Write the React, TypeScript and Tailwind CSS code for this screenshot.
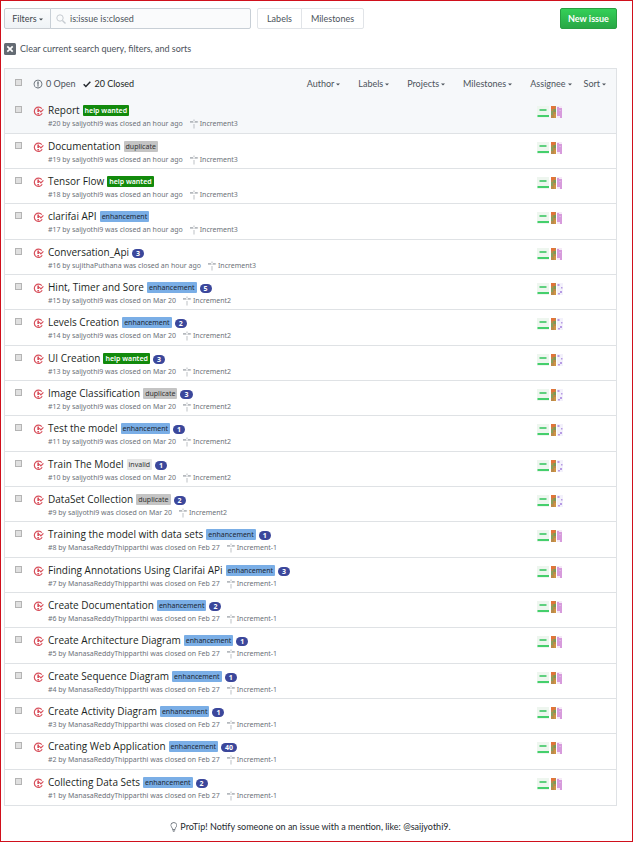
import React from "react";

type LabelName = "help wanted" | "duplicate" | "enhancement" | "invalid";

interface Issue {
  id: number;
  title: string;
  label?: LabelName;
  comments?: number;
  author: string;
  closed: string;
  milestone: string;
  avatar: "pink" | "violet";
}

const me = "saijyothi9";
const manasa = "ManasaReddyThipparthi";

const issues: Issue[] = [
  { id: 20, title: "Report", label: "help wanted", author: me, closed: "an hour ago", milestone: "Increment3", avatar: "pink" },
  { id: 19, title: "Documentation", label: "duplicate", author: me, closed: "an hour ago", milestone: "Increment3", avatar: "pink" },
  { id: 18, title: "Tensor Flow", label: "help wanted", author: me, closed: "an hour ago", milestone: "Increment3", avatar: "pink" },
  { id: 17, title: "clarifai API", label: "enhancement", author: me, closed: "an hour ago", milestone: "Increment3", avatar: "pink" },
  { id: 16, title: "Conversation_Api", comments: 3, author: "sujithaPuthana", closed: "an hour ago", milestone: "Increment3", avatar: "pink" },
  { id: 15, title: "Hint, Timer and Sore", label: "enhancement", comments: 5, author: me, closed: "on Mar 20", milestone: "Increment2", avatar: "violet" },
  { id: 14, title: "Levels Creation", label: "enhancement", comments: 2, author: me, closed: "on Mar 20", milestone: "Increment2", avatar: "violet" },
  { id: 13, title: "UI Creation", label: "help wanted", comments: 3, author: me, closed: "on Mar 20", milestone: "Increment2", avatar: "violet" },
  { id: 12, title: "Image Classification", label: "duplicate", comments: 3, author: me, closed: "on Mar 20", milestone: "Increment2", avatar: "violet" },
  { id: 11, title: "Test the model", label: "enhancement", comments: 1, author: me, closed: "on Mar 20", milestone: "Increment2", avatar: "violet" },
  { id: 10, title: "Train The Model", label: "invalid", comments: 1, author: me, closed: "on Mar 20", milestone: "Increment2", avatar: "violet" },
  { id: 9, title: "DataSet Collection", label: "duplicate", comments: 2, author: me, closed: "on Mar 20", milestone: "Increment2", avatar: "violet" },
  { id: 8, title: "Training the model with data sets", label: "enhancement", comments: 1, author: manasa, closed: "on Feb 27", milestone: "Increment-1", avatar: "pink" },
  { id: 7, title: "Finding Annotations Using Clarifai APi", label: "enhancement", comments: 3, author: manasa, closed: "on Feb 27", milestone: "Increment-1", avatar: "pink" },
  { id: 6, title: "Create Documentation", label: "enhancement", comments: 2, author: manasa, closed: "on Feb 27", milestone: "Increment-1", avatar: "pink" },
  { id: 5, title: "Create Architecture Diagram", label: "enhancement", comments: 1, author: manasa, closed: "on Feb 27", milestone: "Increment-1", avatar: "pink" },
  { id: 4, title: "Create Sequence Diagram", label: "enhancement", comments: 1, author: manasa, closed: "on Feb 27", milestone: "Increment-1", avatar: "pink" },
  { id: 3, title: "Create Activity Diagram", label: "enhancement", comments: 1, author: manasa, closed: "on Feb 27", milestone: "Increment-1", avatar: "pink" },
  { id: 2, title: "Creating Web Application", label: "enhancement", comments: 40, author: manasa, closed: "on Feb 27", milestone: "Increment-1", avatar: "pink" },
  { id: 1, title: "Collecting Data Sets", label: "enhancement", comments: 2, author: manasa, closed: "on Feb 27", milestone: "Increment-1", avatar: "pink" },
];

const labelStyles: Record<LabelName, string> = {
  "help wanted": "bg-[#128a0c] text-white font-semibold",
  duplicate: "bg-[#c4c4c4] text-[#333333]",
  enhancement: "bg-[#7aaee6] text-[#1c2733]",
  invalid: "bg-[#e6e6e6] text-[#333333]",
};

function Caret() {
  return (
    <svg className="mt-0.5 ml-0.5 h-[3px] w-1 shrink-0" viewBox="0 0 4 3" aria-hidden="true">
      <path d="M0 0.500h4L2 2.600z" fill="currentColor" />
    </svg>
  );
}

function ClosedIcon() {
  return (
    <svg className="size-[11px] shrink-0" viewBox="0 0 11 11" fill="none" stroke="#d8505c" aria-hidden="true">
      <path d="M8.800 2.600A4.200 4.200 0 1 0 9.200 7.300" strokeWidth="1.200" />
      <path d="M5.200 2.600v3.300M5.200 7v1.600" strokeWidth="1.700" />
      <path d="M6.200 4.200l1.700 1.700L10.400 3.300" strokeWidth="1.200" />
    </svg>
  );
}

function OpenIcon() {
  return (
    <svg className="size-[10px] shrink-0" viewBox="0 0 14 16" fill="#586069" aria-hidden="true">
      <path fillRule="evenodd" d="M7 2.300c3.140 0 5.700 2.560 5.700 5.700s-2.560 5.700-5.700 5.700A5.710 5.710 0 0 1 1.300 8c0-3.140 2.560-5.700 5.700-5.700zM7 1C3.140 1 0 4.140 0 8s3.140 7 7 7 7-3.140 7-7-3.140-7-7-7zm1 3H6v5h2V4zm0 6H6v2h2v-2z" />
    </svg>
  );
}

function MilestoneIcon() {
  return (
    <svg className="size-[10px] shrink-0" viewBox="0 0 10 10" fill="#a3a8ae" aria-hidden="true">
      <path d="M4.500 0.500h1v1.500h-1zM4.500 5h1v4.500h-1z" opacity="0.700" />
      <path d="M1 2h3.200v1.800H1zM5.800 2H8.200l1.200 0.900-1.200 0.900H5.800z" opacity="0.800" />
      <path d="M4.200 3.200h1.600v0.600H4.200z" opacity="0.600" />
    </svg>
  );
}

function Avatars({ variant }: { variant: Issue["avatar"] }) {
  return (
    <svg className="h-3 w-[26px] shrink-0" viewBox="0 0 26 12" role="img" aria-label="Assignees">
      <rect width="12" height="12" fill="#eef6ef" />
      <rect x="2.500" y="3" width="7" height="2" fill="#5fd07f" />
      <rect x="0.500" y="9" width="11.500" height="2" fill="#45cf6c" />
      <rect x="14" width="5" height="12" fill="#b98a4b" />
      <rect x="14" width="4" height="3" fill="#e2743a" />
      <rect x="16.500" y="3" width="2.500" height="3" fill="#7c9a55" />
      <rect x="14" y="5" width="2" height="4" fill="#88a05c" />
      <rect x="17" y="8" width="2" height="4" fill="#cf9444" />
      {variant === "pink" ? (
        <>
          <rect x="20" width="5" height="12" fill="#f4e8f6" />
          <path d="M20 1h2v1h3v10h-2v-2h-3z" fill="#d79bdc" />
          <rect x="22" y="4" width="2" height="1" fill="#e0b4e4" />
        </>
      ) : (
        <>
          <rect x="20" width="6" height="12" fill="#f3f1fb" />
          <path d="M20.500 1h2v2h-2zM24 4h1.500v1.500H24zM23 8h2v2h-2zM21 10h2v1.500h-2z" fill="#b79be4" />
        </>
      )}
    </svg>
  );
}

function Tick({ label }: { label: string }) {
  return (
    <input
      type="checkbox"
      aria-label={label}
      className="size-[7px] shrink-0 appearance-none border border-[#b4b4b4] bg-[#e0e0e0] checked:bg-[#0366d6]"
    />
  );
}

function IssueRow({ issue, first }: { issue: Issue; first: boolean }) {
  return (
    <li
      className={
        "flex h-[35px] items-start border-b border-[#dfe2e5] pl-2.5 font-['Noto_Sans','Open_Sans',sans-serif] last:border-b-0 nth-[3n+1]:h-[36px] " +
        (first ? "bg-[#f6f8fa]" : "bg-white")
      }
    >
      <span className="flex pt-2">
        <Tick label={"Select issue " + issue.id} />
      </span>
      <span className="ml-[11px] flex pt-2">
        <ClosedIcon />
      </span>
      <div className="ml-1 min-w-0 flex-1 pt-[5px]">
        <div className="flex h-[14px] items-center whitespace-nowrap">
          <a href={"#issue-" + issue.id} className="font-['Open_Sans','Noto_Sans',sans-serif] text-[10px] leading-[14px] text-[#1b1f23]">
            {issue.title}
          </a>
          {issue.label && (
            <a href="#labels" className={"ml-[3px] rounded-[1px] px-0.5 text-[7px] leading-[11px] " + labelStyles[issue.label]}>
              {issue.label}
            </a>
          )}
          {issue.comments && (
            <span className="mt-0.5 ml-[3px] rounded-full bg-[#3b479b] px-1 text-[7px] leading-[9px] font-bold text-white">
              {issue.comments}
            </span>
          )}
        </div>
        <div className="flex h-[13px] items-center text-[7px] leading-3 whitespace-nowrap text-[#6c7178]">
          <span>
            #{issue.id} by {issue.author} was closed {issue.closed}
          </span>
          <a href="#milestone" className="ml-1.5 flex items-center gap-px">
            <MilestoneIcon />
            {issue.milestone}
          </a>
        </div>
      </div>
      <span className="mr-[53px] flex pt-2">
        <Avatars variant={issue.avatar} />
      </span>
    </li>
  );
}

function Menu({ children }: { children: string }) {
  return (
    <button type="button" className="flex items-center">
      {children}
      <Caret />
    </button>
  );
}

export default function App() {
  return (
    <main className="min-h-screen border border-[#d0101c] bg-white pt-[7px] pr-[15px] pl-[3px] font-['Lato','Noto_Sans',sans-serif] text-[9px] leading-3 text-[#4c535b]">
      <header className="flex h-[21px] items-stretch">
        <button
          type="button"
          className="flex w-[47px] items-center justify-center rounded-l-[2px] border border-[#c9cdd2] bg-linear-to-b from-[#fafbfc] to-[#eff3f6] text-[#3f464d]"
        >
          Filters
          <Caret />
        </button>
        <label className="-ml-px flex w-[201px] items-center rounded-r-[2px] border border-[#c8cfd6] bg-[#fafbfc] pl-[5px]">
          <svg className="size-[10px] shrink-0" viewBox="0 0 10 10" fill="none" stroke="#c6cbd1" aria-hidden="true">
            <circle cx="4" cy="4" r="3.200" />
            <path d="M6.400 6.400L9.500 9.500" strokeWidth="1.400" />
          </svg>
          <input aria-label="Search issues" defaultValue="is:issue is:closed" className="ml-1 w-full min-w-0 bg-transparent outline-none" />
        </label>
        <nav className="ml-1.5 flex">
          <a href="#labels" className="flex items-center rounded-l-[2px] border border-[#e1e4e8] px-[9px]">
            Labels
          </a>
          <a href="#milestones" className="-ml-px flex items-center rounded-r-[2px] border border-[#e1e4e8] px-[9px]">
            Milestones
          </a>
        </nav>
        <button
          type="button"
          className="ml-auto w-[57px] rounded-[2px] border border-[#289f42] bg-linear-to-b from-[#34d058] to-[#28a745] font-bold whitespace-nowrap text-white"
        >
          New issue
        </button>
      </header>

      <a href="#clear" className="mt-3.5 flex h-3 items-center gap-1">
        <svg className="size-3 shrink-0" viewBox="0 0 12 12" aria-hidden="true">
          <rect width="12" height="12" rx="1.500" fill="#646b73" />
          <path d="M3.300 3.300l5.400 5.400M8.700 3.300L3.300 8.700" stroke="#fff" strokeWidth="1.700" />
        </svg>
        Clear current search query, filters, and sorts
      </a>

      <section className="mt-[13px] border border-[#dfe2e5]">
        <div className="flex h-[29px] items-center bg-[#f6f8fa] pr-[10px] pl-2.5">
          <span className="-mt-0.5 flex">
            <Tick label="Select all issues" />
          </span>
          <a href="#open" className="ml-[11px] flex items-center gap-[3px]">
            <OpenIcon />0 Open
          </a>
          <a href="#closed" className="ml-2 flex items-center gap-[3px] text-[#1b1f23]">
            <svg className="size-2 shrink-0" viewBox="0 0 12 12" fill="none" stroke="#24292e" strokeWidth="2.200" aria-hidden="true">
              <path d="M1 6.500l3.300 3.300L11 2.800" />
            </svg>
            20 Closed
          </a>
          <div className="ml-auto flex gap-[18px]">
            <Menu>Author</Menu>
            <Menu>Labels</Menu>
            <Menu>Projects</Menu>
            <Menu>Milestones</Menu>
            <Menu>Assignee</Menu>
          </div>
          <div className="ml-3">
            <Menu>Sort</Menu>
          </div>
        </div>
        <ul>
          {issues.map((issue, i) => (
            <IssueRow key={issue.id} issue={issue} first={i === 0} />
          ))}
        </ul>
      </section>

      <footer className="mt-[15px] flex items-center justify-center gap-[3px] text-[#24292e]">
        <svg className="h-[10px] w-[7px] shrink-0" viewBox="0 0 12 16" fill="#586069" aria-hidden="true">
          <path fillRule="evenodd" d="M6.500 0C3.480 0 1 2.190 1 5c0 .920.550 2.250 1 3 1.340 2.250 1.780 2.780 2 4v1h5v-1c.220-1.220.660-1.750 2-4 .450-.750 1-2.080 1-3 0-2.810-2.480-5-5.500-5zm3.640 7.480c-.250.440-.470.800-.670 1.110-.860 1.410-1.250 2.060-1.450 3.230-.020.050-.020.110-.020.170H5c0-.060 0-.130-.020-.170-.200-1.170-.590-1.830-1.450-3.230-.200-.310-.420-.670-.670-1.110C2.440 6.780 2 5.650 2 5c0-2.200 2.020-4 4.500-4 1.220 0 2.360.420 3.220 1.190C10.550 2.940 11 3.940 11 5c0 .660-.440 1.780-.860 2.480zM4 14h5c-.230 1.140-1.300 2-2.500 2s-2.270-.860-2.500-2z" />
        </svg>
        <p>ProTip! Notify someone on an issue with a mention, like: @saijyothi9.</p>
      </footer>
    </main>
  );
}
